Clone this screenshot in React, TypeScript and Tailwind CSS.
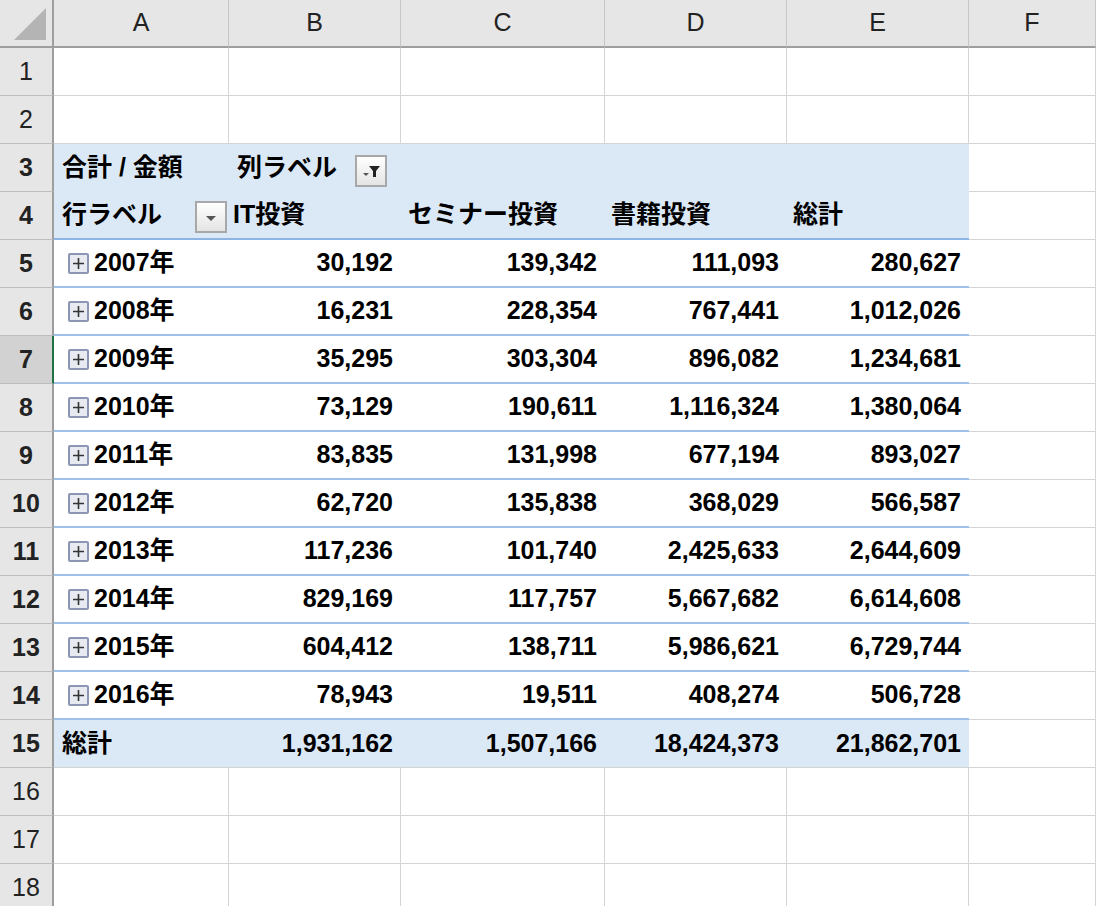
const cols = ["A", "B", "C", "D", "E", "F"];
const widths = ["w-[175px]", "w-[172px]", "w-[204px]", "w-[182px]", "w-[182px]", "w-[127px]"];

const data: [string, string, string, string, string][] = [
  ["2007年", "30,192", "139,342", "111,093", "280,627"],
  ["2008年", "16,231", "228,354", "767,441", "1,012,026"],
  ["2009年", "35,295", "303,304", "896,082", "1,234,681"],
  ["2010年", "73,129", "190,611", "1,116,324", "1,380,064"],
  ["2011年", "83,835", "131,998", "677,194", "893,027"],
  ["2012年", "62,720", "135,838", "368,029", "566,587"],
  ["2013年", "117,236", "101,740", "2,425,633", "2,644,609"],
  ["2014年", "829,169", "117,757", "5,667,682", "6,614,608"],
  ["2015年", "604,412", "138,711", "5,986,621", "6,729,744"],
  ["2016年", "78,943", "19,511", "408,274", "506,728"],
];

function RowNum({ n }: { n: number }) {
  const sel = n === 7;
  return (
    <div
      className={`w-[54px] shrink-0 flex items-center justify-center border-b border-r-2 border-b-[#bdbdbd] text-[25px] ${
        sel ? "bg-[#d2d2d2] border-r-[#217346] text-[#222]" : "bg-[#e6e6e6] border-r-[#9e9e9e] text-[#222]"
      }`}
    >
      {n}
    </div>
  );
}

function EmptyRow({ n }: { n: number }) {
  return (
    <div className="flex h-[48px]">
      <RowNum n={n} />
      {widths.map((w, i) => (
        <div key={i} className={`${w} shrink-0 border-r border-b border-[#d4d4d4]`} />
      ))}
    </div>
  );
}

function Btn({ filter }: { filter?: boolean }) {
  return (
    <span className="inline-flex w-[32px] h-[32px] border-2 border-[#a8a8a8] bg-gradient-to-b from-white to-[#e4e4e4] items-center justify-center shrink-0">
      <svg width="22" height="18" viewBox="0 0 22 18">
        {filter ? (
          <>
            <path d="M9 4h11l-4 5v6h-3V9z" fill="#222" />
            <path d="M3 11h6l-3 3z" fill="#555" />
          </>
        ) : (
          <path d="M6 8h10l-5 5z" fill="#555" />
        )}
      </svg>
    </span>
  );
}

function PlusBox() {
  return (
    <span className="inline-flex w-[21px] h-[21px] border-2 border-[#8c95b4] bg-[#e8eaf2] items-center justify-center mr-[5px] rounded-[2px]">
      <svg width="13" height="13" viewBox="0 0 13 13">
        <path d="M1 6.5h11M6.5 1v11" stroke="#333" strokeWidth="1.6" />
      </svg>
    </span>
  );
}

export default function App() {
  return (
    <div
      className="w-[1096px] h-[906px] overflow-hidden bg-white text-black"
      style={{ fontFamily: '"Liberation Sans", "Noto Sans CJK JP", sans-serif' }}
    >
      {/* column headers */}
      <div className="flex h-[48px]">
        <div className="w-[54px] shrink-0 bg-[#e6e6e6] border-r-2 border-b-2 border-[#9e9e9e] relative">
          <svg className="absolute right-[6px] bottom-[6px]" width="32" height="32" viewBox="0 0 32 32">
            <path d="M32 0V32H0z" fill="#b4b4b4" />
          </svg>
        </div>
        {cols.map((c, i) => (
          <div
            key={c}
            className={`${widths[i]} shrink-0 bg-[#e6e6e6] border-r border-r-[#c6c6c6] border-b-2 border-b-[#9e9e9e] flex items-center justify-center text-[25px] text-[#222]`}
          >
            {c}
          </div>
        ))}
      </div>

      <EmptyRow n={1} />
      <EmptyRow n={2} />

      {/* row 3 */}
      <div className="flex h-[48px] font-bold text-[25px]">
        <RowNum n={3} />
        <div className="w-[915px] shrink-0 bg-[#dbe8f6] border-b border-[#dbe8f6] flex items-center pl-[8px]">
          <span className="w-[175px]">合計 / 金額</span>
          <span>列ラベル</span>
          <span className="ml-[18px] mt-[8px]"><Btn filter /></span>
        </div>
        <div className="w-[127px] shrink-0 border-r border-b border-[#d4d4d4]" />
      </div>

      {/* row 4 */}
      <div className="flex h-[48px] font-bold text-[25px]">
        <RowNum n={4} />
        <div className="w-[915px] shrink-0 bg-[#dbe8f6] border-b-2 border-[#8db4e2] flex items-center">
          <div className="w-[175px] flex items-center pl-[8px] pr-[2px] justify-between">
            <span>行ラベル</span>
            <span className="mt-[6px]"><Btn /></span>
          </div>
          <span className="w-[172px] pl-[4px]">IT投資</span>
          <span className="w-[204px] pl-[7px]">セミナー投資</span>
          <span className="w-[182px] pl-[6px]">書籍投資</span>
          <span className="w-[182px] pl-[6px]">総計</span>
        </div>
        <div className="w-[127px] shrink-0 border-r border-b border-[#d4d4d4]" />
      </div>

      {data.map((r, idx) => (
        <div key={r[0]} className="flex h-[48px] font-bold text-[25px]">
          <RowNum n={idx + 5} />
          <div className="w-[915px] shrink-0 border-b-2 border-[#9fc0e8] flex items-center">
            <div className="w-[175px] flex items-center pl-[14px]">
              <PlusBox />
              {r[0]}
            </div>
            <span className="w-[172px] text-right pr-[8px]">{r[1]}</span>
            <span className="w-[204px] text-right pr-[8px]">{r[2]}</span>
            <span className="w-[182px] text-right pr-[8px]">{r[3]}</span>
            <span className="w-[182px] text-right pr-[8px]">{r[4]}</span>
          </div>
          <div className="w-[127px] shrink-0 border-r border-b border-[#d4d4d4]" />
        </div>
      ))}

      {/* row 15 */}
      <div className="flex h-[48px] font-bold text-[25px]">
        <RowNum n={15} />
        <div className="w-[915px] shrink-0 bg-[#dbe8f6] border-b border-[#d4d4d4] flex items-center">
          <span className="w-[175px] pl-[8px]">総計</span>
          <span className="w-[172px] text-right pr-[8px]">1,931,162</span>
          <span className="w-[204px] text-right pr-[8px]">1,507,166</span>
          <span className="w-[182px] text-right pr-[8px]">18,424,373</span>
          <span className="w-[182px] text-right pr-[8px]">21,862,701</span>
        </div>
        <div className="w-[127px] shrink-0 border-r border-b border-[#d4d4d4]" />
      </div>

      <EmptyRow n={16} />
      <EmptyRow n={17} />
      <EmptyRow n={18} />
    </div>
  );
}
